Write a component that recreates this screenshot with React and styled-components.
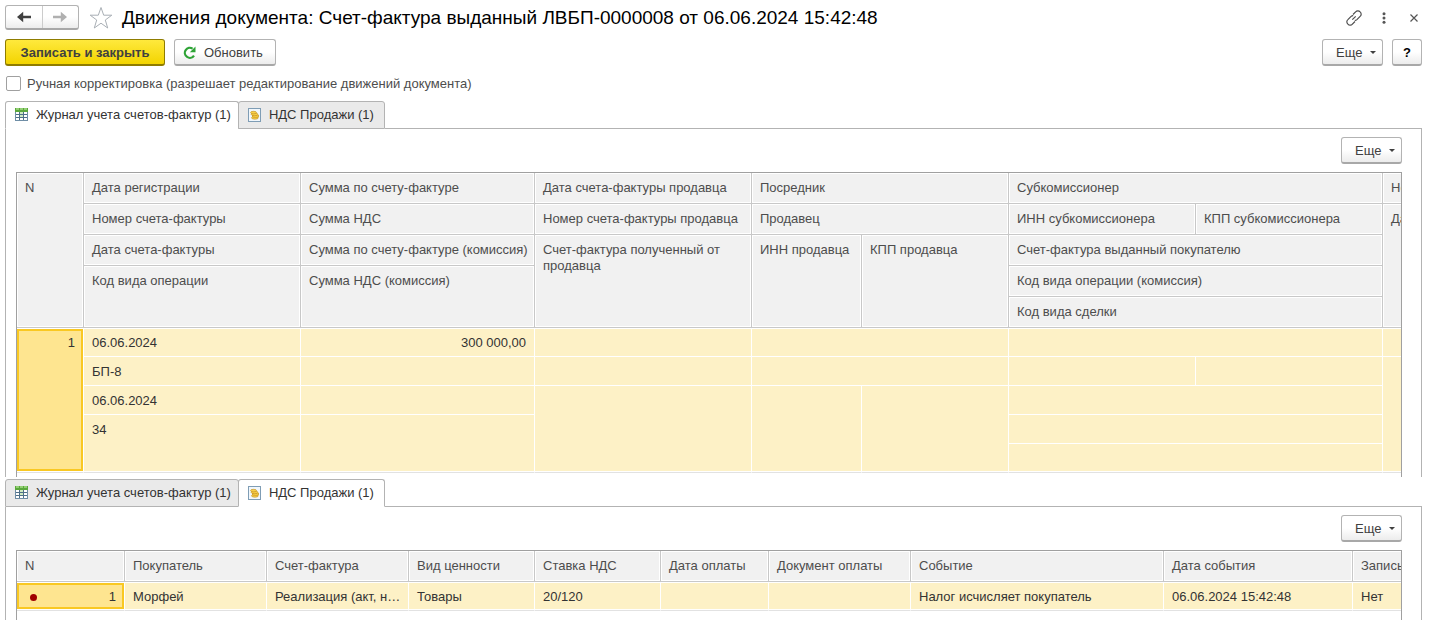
import React, { useState } from 'react'
import styled, { createGlobalStyle } from 'styled-components'

const moves = {
  number: 1,
  date: '06.06.2024',
  invoice: 'БП-8',
  invoiceDate: '06.06.2024',
  code: '34',
  sum: '300 000,00',
}

const salesColumns = [
  { title: 'N', width: 108 },
  { title: 'Покупатель', width: 142, value: 'Морфей' },
  { title: 'Счет-фактура', width: 142, value: 'Реализация (акт, н…' },
  { title: 'Вид ценности', width: 126, value: 'Товары' },
  { title: 'Ставка НДС', width: 126, value: '20/120' },
  { title: 'Дата оплаты', width: 108, value: '' },
  { title: 'Документ оплаты', width: 142, value: '' },
  { title: 'Событие', width: 253, value: 'Налог исчисляет покупатель' },
  { title: 'Дата события', width: 189, value: '06.06.2024 15:42:48' },
  { title: 'Запись', value: 'Нет' },
]

const journalWidths = [67, 217, 234, 217, 110, 147, 187, 187]

function ArrowIcon({ flip }) {
  return (
    <svg width="16" height="12" viewBox="0 0 16 12" fill="currentColor">
      {flip ? (
        <path d="M1 4.800H8.800V0.800L15 6L8.800 11.200V7.200H1Z" />
      ) : (
        <path d="M15 4.800H7.200V0.800L1 6L7.200 11.200V7.200H15Z" />
      )}
    </svg>
  )
}

function StarIcon() {
  return (
    <svg width="24" height="24" viewBox="0 0 24 24" fill="none" stroke="#a9afb5" strokeWidth="1">
      <path d="M12 1.500L14.700 9.200H22.800L16.300 14L18.700 22L12 17.200L5.300 22L7.700 14L1.200 9.200H9.300Z" />
    </svg>
  )
}

function RefreshIcon() {
  return (
    <svg width="13" height="13" viewBox="0 0 13 13" fill="none">
      <path d="M11 9.600A5 5 0 1 1 9.600 2.600" stroke="#2ea336" strokeWidth="2.200" />
      <path d="M12.500 0.500V6.200H6.800Z" fill="#2ea336" />
    </svg>
  )
}

function LinkIcon() {
  return (
    <svg width="16" height="16" viewBox="0 0 16 16" fill="none" stroke="#4d4d4d" strokeWidth="1.200">
      <path d="M7 4.500L9.600 1.900A2.900 2.900 0 0 1 14.100 1.900A2.900 2.900 0 0 1 14.100 6.400L10.900 9.600A2.900 2.900 0 0 1 8.800 10.300" />
      <path d="M9 11.500L6.400 14.100A2.900 2.900 0 0 1 1.900 14.100A2.900 2.900 0 0 1 1.900 9.600L5.100 6.400A2.900 2.900 0 0 1 7.200 5.700" />
      <path d="M6.300 9.700L9.700 6.300" />
    </svg>
  )
}

function DotsIcon() {
  return (
    <svg width="16" height="12" viewBox="0 0 16 12" fill="#555">
      <circle cx="8" cy="1.700" r="1.500" />
      <circle cx="8" cy="6" r="1.500" />
      <circle cx="8" cy="10.300" r="1.500" />
    </svg>
  )
}

function CloseIcon() {
  return (
    <svg width="16" height="8" viewBox="0 0 16 8" stroke="#555" strokeWidth="1.200">
      <path d="M4.500 0.500L11.500 7.500M11.500 0.500L4.500 7.500" />
    </svg>
  )
}

function GridIcon() {
  return (
    <svg width="13" height="13" viewBox="0 0 13 13" shapeRendering="crispEdges">
      <rect width="13" height="13" fill="#6f8ea6" />
      <rect x="1" y="1" width="11" height="11" fill="#fff" />
      <rect width="13" height="4" fill="#5aa83c" />
      <path d="M1 0H4V2H1ZM5 0H8V2H5ZM9 0H12V2H9Z" fill="#93cf74" />
      <path d="M4 4H5V12H4ZM8 4H9V12H8ZM1 6H12V7H1ZM1 9H12V10H1Z" fill="#4f7089" />
      <path d="M5 4H8V6H5ZM5 7H8V9H5Z" fill="#cdeac0" />
    </svg>
  )
}

function CoinsIcon() {
  return (
    <svg width="13" height="14" viewBox="0 0 13 14">
      <rect x="0.500" y="0.500" width="12" height="13" fill="#f1f7fc" stroke="#7f9db5" />
      <g fill="#f8d04a" stroke="#c08a1a" strokeWidth="0.600">
        <ellipse cx="6.900" cy="9.800" rx="3.400" ry="1.400" />
        <ellipse cx="7.500" cy="8" rx="3.400" ry="1.400" />
        <ellipse cx="6.500" cy="6.300" rx="3.400" ry="1.400" />
        <ellipse cx="5.500" cy="4.600" rx="3" ry="1.300" />
      </g>
    </svg>
  )
}

function More() {
  return (
    <MoreButton>
      Еще
      <Caret />
    </MoreButton>
  )
}

function Tabs({ active, onSelect }) {
  return (
    <TabBar role="tablist">
      <Tab role="tab" aria-selected={active === 0} $active={active === 0} onClick={() => onSelect(0)}>
        <GridIcon />
        Журнал учета счетов-фактур (1)
      </Tab>
      <Tab role="tab" aria-selected={active === 1} $active={active === 1} onClick={() => onSelect(1)}>
        <CoinsIcon />
        НДС Продажи (1)
      </Tab>
      <TabRest />
    </TabBar>
  )
}

function JournalTable() {
  return (
    <Table>
      <colgroup>
        {journalWidths.map((w, i) => (
          <Col key={i} $width={w} />
        ))}
        <col />
      </colgroup>
      <thead>
        <tr>
          <Th rowSpan={5}>N</Th>
          <Th>Дата регистрации</Th>
          <Th>Сумма по счету-фактуре</Th>
          <Th>Дата счета-фактуры продавца</Th>
          <Th colSpan={2}>Посредник</Th>
          <Th colSpan={2}>Субкомиссионер</Th>
          <Th>Но</Th>
        </tr>
        <tr>
          <Th>Номер счета-фактуры</Th>
          <Th>Сумма НДС</Th>
          <Th>Номер счета-фактуры продавца</Th>
          <Th colSpan={2}>Продавец</Th>
          <Th>ИНН субкомиссионера</Th>
          <Th>КПП субкомиссионера</Th>
          <Th rowSpan={4}>Да</Th>
        </tr>
        <tr>
          <Th>Дата счета-фактуры</Th>
          <Th>Сумма по счету-фактуре (комиссия)</Th>
          <Th rowSpan={3} $wrap>Счет-фактура полученный от продавца</Th>
          <Th rowSpan={3}>ИНН продавца</Th>
          <Th rowSpan={3}>КПП продавца</Th>
          <Th colSpan={2}>Счет-фактура выданный покупателю</Th>
        </tr>
        <tr>
          <Th rowSpan={2}>Код вида операции</Th>
          <Th rowSpan={2}>Сумма НДС (комиссия)</Th>
          <Th colSpan={2}>Код вида операции (комиссия)</Th>
        </tr>
        <tr>
          <Th colSpan={2}>Код вида сделки</Th>
        </tr>
      </thead>
      <tbody>
        <tr>
          <SelectedTd rowSpan={5} $right $last>{moves.number}</SelectedTd>
          <Td>{moves.date}</Td>
          <Td $right>{moves.sum}</Td>
          <Td />
          <Td colSpan={2} />
          <Td colSpan={2} />
          <Td />
        </tr>
        <tr>
          <Td>{moves.invoice}</Td>
          <Td />
          <Td />
          <Td colSpan={2} />
          <Td />
          <Td />
          <Td rowSpan={4} $last />
        </tr>
        <tr>
          <Td>{moves.invoiceDate}</Td>
          <Td />
          <Td rowSpan={3} $last />
          <Td rowSpan={3} $last />
          <Td rowSpan={3} $last />
          <Td colSpan={2} />
        </tr>
        <tr>
          <Td rowSpan={2} $last>{moves.code}</Td>
          <Td rowSpan={2} $last />
          <Td colSpan={2} />
        </tr>
        <tr>
          <Td colSpan={2} $last />
        </tr>
      </tbody>
    </Table>
  )
}

function SalesTable() {
  return (
    <Table>
      <colgroup>
        {salesColumns.map((c) => (
          <Col key={c.title} $width={c.width} />
        ))}
      </colgroup>
      <thead>
        <tr>
          {salesColumns.map((c) => (
            <Th key={c.title}>{c.title}</Th>
          ))}
        </tr>
      </thead>
      <tbody>
        <tr>
          <SelectedTd $last>
            <RowMark>
              <Dot />
              1
            </RowMark>
          </SelectedTd>
          {salesColumns.slice(1).map((c) => (
            <Td key={c.title} $last>{c.value}</Td>
          ))}
        </tr>
      </tbody>
    </Table>
  )
}

function App() {
  const [manual, setManual] = useState(false)
  const [top, setTop] = useState(0)
  const [bottom, setBottom] = useState(1)

  return (
    <Page>
      <GlobalStyle />
      <Header>
        <NavGroup>
          <NavButton aria-label="Назад"><ArrowIcon /></NavButton>
          <NavButton aria-label="Вперед" disabled><ArrowIcon flip /></NavButton>
        </NavGroup>
        <IconButton aria-label="В избранное"><StarIcon /></IconButton>
        <Title>Движения документа: Счет-фактура выданный ЛВБП-0000008 от 06.06.2024 15:42:48</Title>
        <WindowTools>
          <IconButton aria-label="Ссылка"><LinkIcon /></IconButton>
          <IconButton aria-label="Меню"><DotsIcon /></IconButton>
          <IconButton aria-label="Закрыть"><CloseIcon /></IconButton>
        </WindowTools>
      </Header>
      <Toolbar>
        <PrimaryButton>Записать и закрыть</PrimaryButton>
        <Button>
          <RefreshIcon />
          Обновить
        </Button>
        <Spacer />
        <More />
        <HelpButton>?</HelpButton>
      </Toolbar>
      <CheckLabel>
        <Checkbox type="checkbox" checked={manual} onChange={(e) => setManual(e.target.checked)} />
        Ручная корректировка (разрешает редактирование движений документа)
      </CheckLabel>

      <Tabs active={top} onSelect={setTop} />
      <Panel>
        <PanelBar><More /></PanelBar>
        <Grid>{top === 0 ? <JournalTable /> : <SalesTable />}</Grid>
      </Panel>

      <Gap />
      <Tabs active={bottom} onSelect={setBottom} />
      <Panel $fill>
        <PanelBar><More /></PanelBar>
        <Grid>{bottom === 0 ? <JournalTable /> : <SalesTable />}</Grid>
      </Panel>
    </Page>
  )
}

export default App

const GlobalStyle = createGlobalStyle`
* {
  box-sizing: border-box;
}
body {
  margin: 0;
  background: #fff;
  color: #4d4d4d;
  font-family: "Liberation Sans", Arial, sans-serif;
  font-size: 13px;
}
button, input {
  font: inherit;
  color: inherit;
}
`
const Page = styled.div`
  display: flex;
  flex-direction: column;
  min-height: 100vh;
  padding: 5px 10px 0 5px;
`
const Header = styled.header`
  display: flex;
  align-items: center;
  height: 25px;
`
const NavGroup = styled.div`
  display: flex;
  width: 74px;
  height: 25px;
  margin-right: 10px;
  border: 1px solid #b3b3b3;
  border-bottom: 2px solid #a8a8a8;
  border-radius: 3px;
  background: linear-gradient(#fff 50%, #ececec);
`
const NavButton = styled.button`
  flex: 1;
  display: flex;
  align-items: center;
  justify-content: center;
  padding: 0;
  border: 0;
  background: none;
  color: #404040;
  & + & {
    border-left: 1px solid #ccc;
  }
  &:disabled {
    color: #b0b0b0;
  }
`
const IconButton = styled.button`
  display: flex;
  align-items: center;
  justify-content: center;
  padding: 0;
  border: 0;
  background: none;
`
const Title = styled.h1`
  flex: 1;
  margin: 0 0 0 9px;
  color: #000;
  font-size: 19px;
  font-weight: 400;
  line-height: 24px;
  white-space: nowrap;
`
const WindowTools = styled.div`
  display: flex;
  align-items: center;
  gap: 14px;
`
const Toolbar = styled.div`
  display: flex;
  gap: 9px;
  margin-top: 9px;
`
const Spacer = styled.div`
  flex: 1;
`
const Button = styled.button`
  display: flex;
  align-items: center;
  gap: 8px;
  height: 27px;
  padding: 0 12px 0 8px;
  border: 1px solid #b3b3b3;
  border-bottom: 2px solid #a8a8a8;
  border-radius: 3px;
  background: linear-gradient(#fff 50%, #ececec);
  color: #404040;
  cursor: pointer;
`
const PrimaryButton = styled(Button)`
  justify-content: center;
  width: 160px;
  padding: 0;
  border-color: #8f7c00;
  background: linear-gradient(#ffe93d, #f3d400);
  font-weight: 700;
`
const MoreButton = styled(Button)`
  justify-content: space-between;
  width: 61px;
  padding: 0 6px 0 13px;
`
const HelpButton = styled(Button)`
  justify-content: center;
  width: 30px;
  padding: 0;
  color: #000;
  font-weight: 700;
`
const Caret = styled.span`
  border: 3px solid transparent;
  border-top-color: #404040;
  border-bottom: 0;
`
const CheckLabel = styled.label`
  display: flex;
  align-items: center;
  gap: 6px;
  height: 15px;
  margin: 10px 0;
  padding-left: 1px;
`
const Checkbox = styled.input`
  appearance: none;
  width: 15px;
  height: 15px;
  margin: 0;
  border: 1px solid #a0a0a0;
  border-radius: 2px;
  background: #fff;
  &:checked {
    background: #ffe100;
  }
`
const TabBar = styled.div`
  display: flex;
  height: 28px;
`
const Tab = styled.button`
  display: flex;
  align-items: center;
  gap: 8px;
  min-width: 147px;
  padding: 0 7px 1px 9px;
  border: 1px solid #b3b3b3;
  border-bottom-color: ${(p) => (p.$active ? '#fff' : '#b3b3b3')};
  border-radius: 3px 3px 0 0;
  background: ${(p) => (p.$active ? '#fff' : '#eaeaea')};
  color: #333;
  & + & {
    margin-left: -1px;
  }
`
const TabRest = styled.div`
  flex: 1;
  border-bottom: 1px solid #b3b3b3;
`
const Panel = styled.section`
  display: flex;
  flex-direction: column;
  flex: ${(p) => (p.$fill ? '1 0 auto' : 'none')};
  padding: 8px 19px 0 10px;
  border: 1px solid #b3b3b3;
  border-top: 0;
  border-bottom: 0;
`
const PanelBar = styled.div`
  display: flex;
  justify-content: flex-end;
  margin-bottom: 8px;
`
const Gap = styled.div`
  height: 2px;
`
const Grid = styled.div`
  flex: 1;
  padding-bottom: 4px;
  overflow: hidden;
  border: 1px solid #a0a0a0;
  border-bottom: 0;
`
const Table = styled.table`
  width: 100%;
  min-width: 1500px;
  border-spacing: 0;
  table-layout: fixed;
`
const Col = styled.col`
  width: ${(p) => (p.$width ? `${p.$width}px` : 'auto')};
`
const Th = styled.th`
  height: 31px;
  padding: 7px 6px 0 8px;
  border-right: 1px solid #c8c8c8;
  border-bottom: 1px solid #c8c8c8;
  background: #f1f1f1;
  box-shadow: inset 0 0 0 1px #fff;
  color: #4d4d4d;
  font-weight: 400;
  line-height: 16px;
  text-align: left;
  vertical-align: top;
  white-space: ${(p) => (p.$wrap ? 'normal' : 'nowrap')};
`
const Td = styled.td`
  height: 29px;
  padding: 7px 8px 0;
  border-right: 1px solid #fff;
  border-bottom: 1px solid ${(p) => (p.$last ? '#e2e2e2' : '#fff')};
  background: #fdf1c6;
  box-shadow: ${(p) => (p.$last ? 'inset 0 -1px #fff' : 'none')};
  color: #333;
  line-height: 16px;
  text-align: ${(p) => (p.$right ? 'right' : 'left')};
  vertical-align: top;
  white-space: nowrap;
  tr:first-child > & {
    box-shadow: inset 0 1px #fff${(p) => (p.$last ? ', inset 0 -1px #fff' : '')};
  }
`
const SelectedTd = styled(Td)`
  background: #fee590;
  tr:first-child > & {
    box-shadow: inset 0 1px #fff, inset 0 -1px #fff, inset 2px 0 #f9c822, inset -2px 0 #f9c822,
      inset 0 3px #f9c822, inset 0 -3px #f9c822;
  }
`
const RowMark = styled.div`
  display: flex;
  align-items: center;
  justify-content: space-between;
  padding-left: 5px;
`
const Dot = styled.span`
  width: 7px;
  height: 7px;
  border-radius: 50%;
  background: #a00000;
`
